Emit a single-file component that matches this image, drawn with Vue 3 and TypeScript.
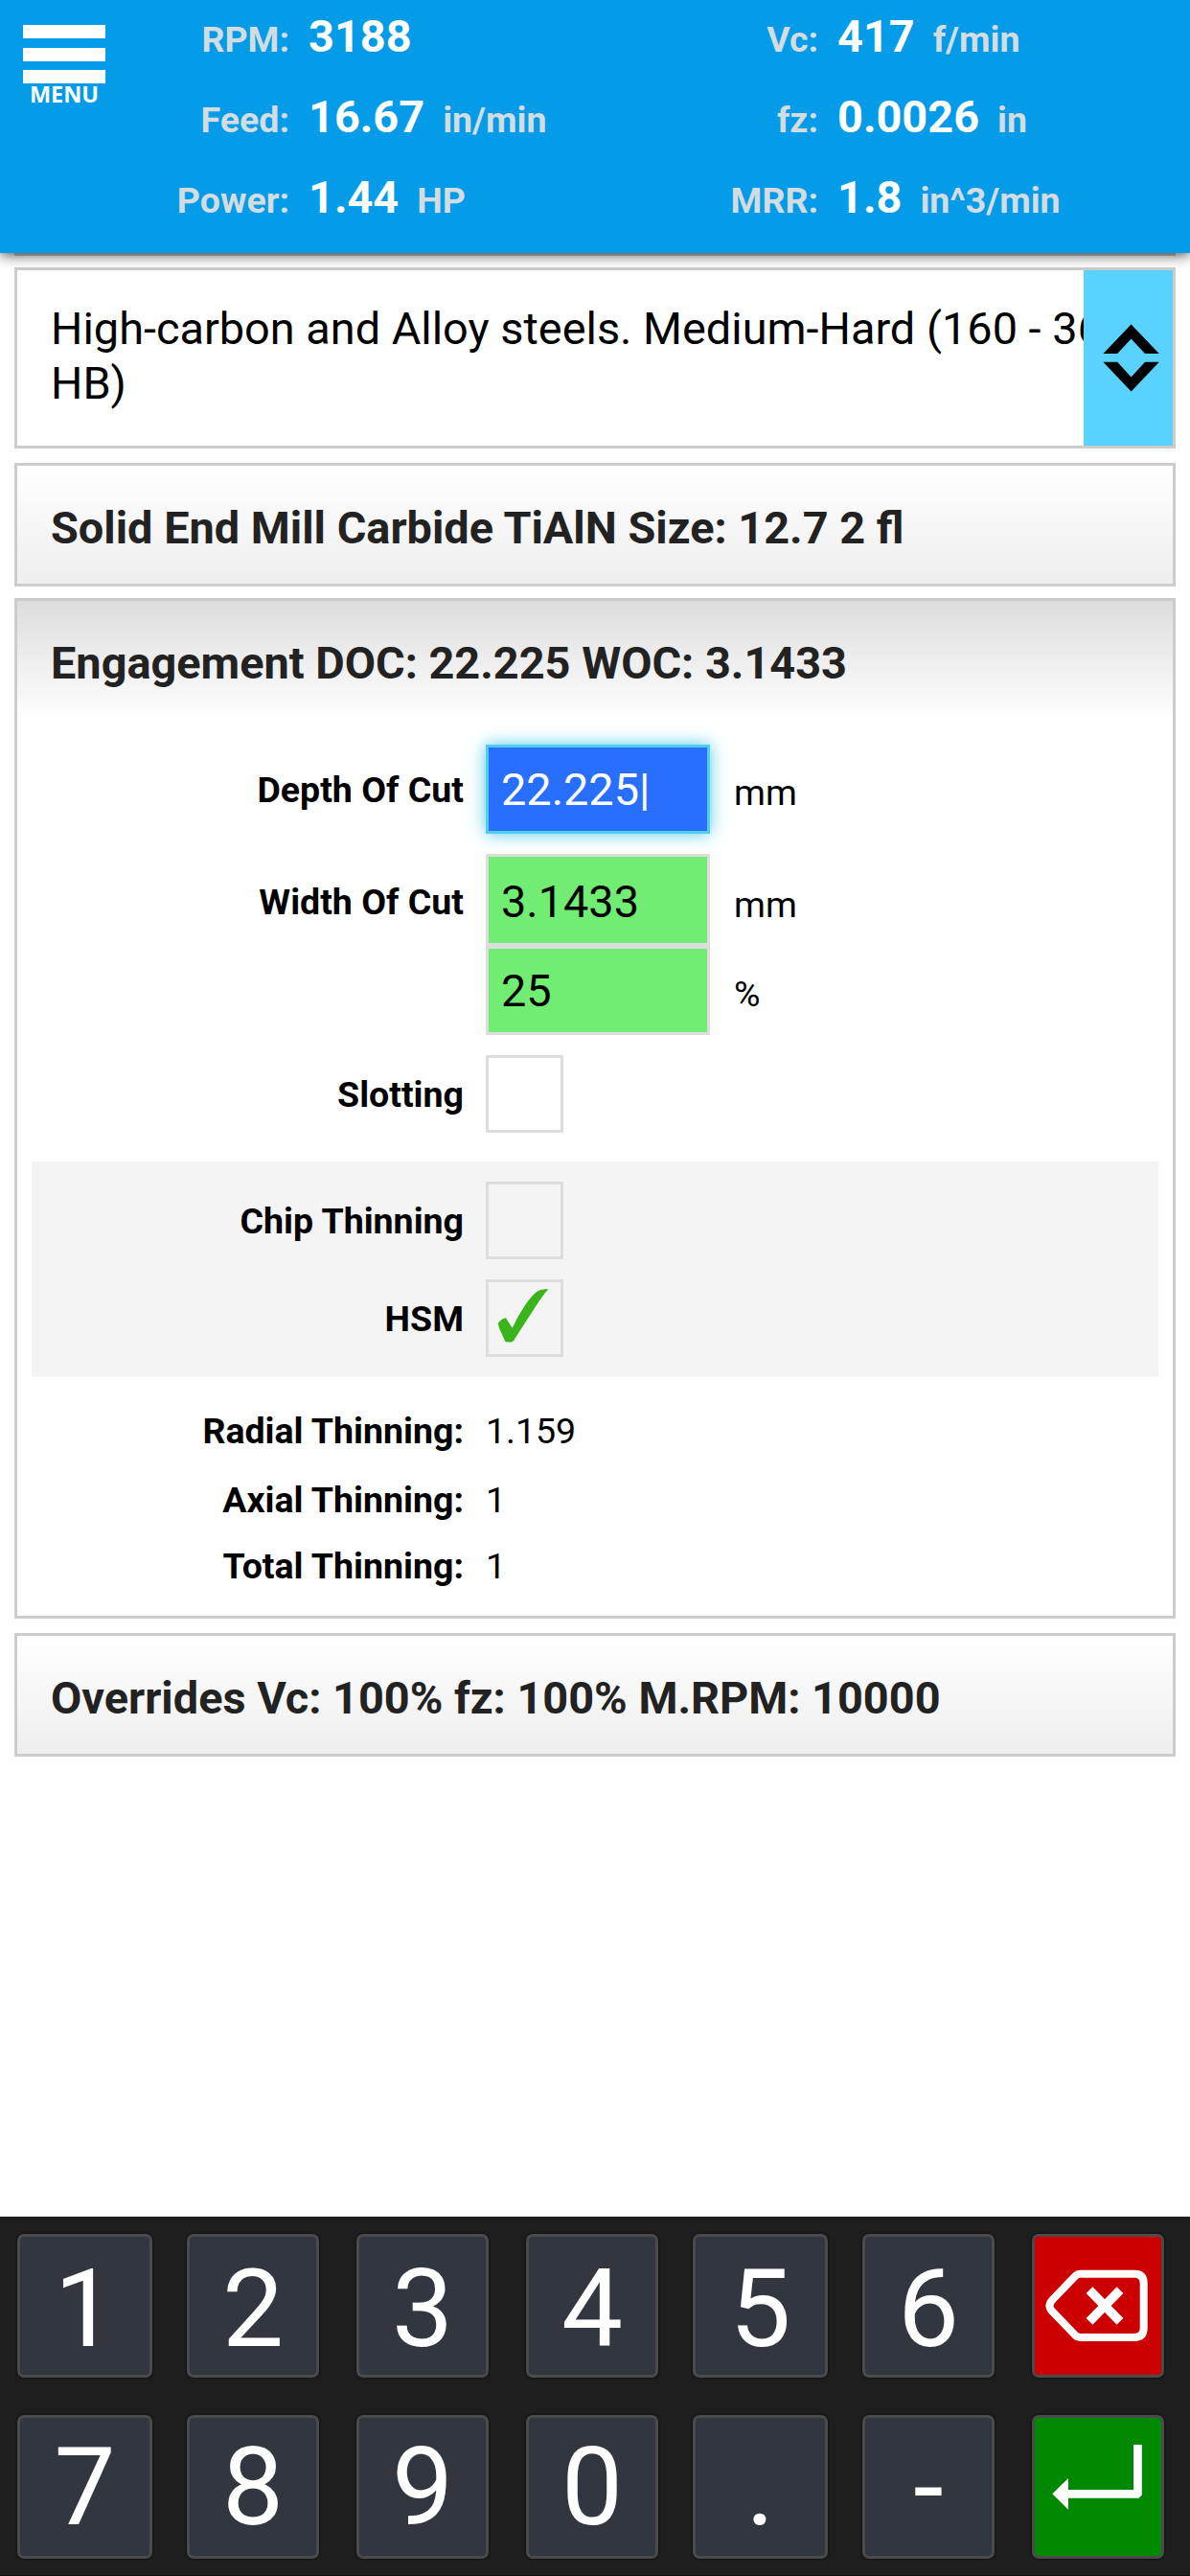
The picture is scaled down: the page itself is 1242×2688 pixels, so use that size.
<script setup lang="ts">
interface Reading {
  label: string
  value: string
  unit: string
}

interface Key {
  id: string
  kind: 'digit' | 'delete' | 'enter'
  wide?: boolean
}

const readings: Reading[][] = [
  [
    { label: 'RPM:', value: '3188', unit: '' },
    { label: 'Feed:', value: '16.67', unit: 'in/min' },
    { label: 'Power:', value: '1.44', unit: 'HP' },
  ],
  [
    { label: 'Vc:', value: '417', unit: 'f/min' },
    { label: 'fz:', value: '0.0026', unit: 'in' },
    { label: 'MRR:', value: '1.8', unit: 'in^3/min' },
  ],
]

const thinning = [
  { label: 'Radial Thinning:', value: '1.159' },
  { label: 'Axial Thinning:', value: '1' },
  { label: 'Total Thinning:', value: '1' },
]

const digit = (id: string, wide = false): Key => ({ id, kind: 'digit', wide })

const keyRows: Key[][] = [
  [digit('1', true), digit('2'), digit('3'), digit('4'), digit('5', true), digit('6'), { id: 'delete', kind: 'delete' }],
  [digit('7', true), digit('8'), digit('9'), digit('0'), digit('.', true), digit('-'), { id: 'enter', kind: 'enter' }],
]
</script>

<template>
  <div class="screen">
    <header class="topbar">
      <div class="menu">
        <span class="bar"></span>
        <span class="bar"></span>
        <span class="bar"></span>
        <span class="menu-text">MENU</span>
      </div>
      <div v-for="(col, i) in readings" :key="i" class="readings" :class="i === 0 ? 'first' : 'second'">
        <div v-for="r in col" :key="r.label" class="reading">
          <span class="r-label">{{ r.label }}</span>
          <span class="r-value">{{ r.value }}</span>
          <span class="r-unit">{{ r.unit }}</span>
        </div>
      </div>
    </header>

    <main class="content">
      <div class="tucked"></div>
      <section class="card material">
        <p class="material-text">High-carbon and Alloy steels. Medium-Hard (160 - 360 HB)</p>
        <div class="picker">
          <svg width="93" height="183" viewBox="0 0 93 183">
            <path d="M49.6 56.5 78.8 87H64L49.6 71.5 35.2 87H20.4Z" />
            <path d="M49.6 126.5 78.8 95.7H64L49.6 111.5 35.2 95.7H20.4Z" />
          </svg>
        </div>
      </section>

      <section class="card bar-card tool">
        <h2>Solid End Mill Carbide TiAlN Size: 12.7 2 fl</h2>
      </section>

      <section class="card engagement">
        <h2>Engagement DOC: 22.225 WOC: 3.1433</h2>
        <div class="row depth">
          <label>Depth Of Cut</label>
          <div class="field focus">22.225|</div>
          <span class="unit">mm</span>
        </div>
        <div class="row width">
          <label>Width Of Cut</label>
          <div class="field tall">3.1433</div>
          <span class="unit">mm</span>
        </div>
        <div class="row percent">
          <label></label>
          <div class="field">25</div>
          <span class="unit">%</span>
        </div>
        <div class="row check slotting">
          <label>Slotting</label>
          <div class="box"></div>
        </div>
        <div class="shaded">
          <div class="row check">
            <label>Chip Thinning</label>
            <div class="box"></div>
          </div>
          <div class="row check">
            <label>HSM</label>
            <div class="box">
              <svg width="75" height="75" viewBox="0 0 75 75">
                <path d="M9.7 43Q13 38 18 37.3L24.7 47.7Q30 36 37 25.5Q43.5 15.5 50 10Q54 7 62.3 7Q55 15.5 47 28.5L27.5 58.5Q26 62.3 23 62.5L17.7 62.3Q16.5 60 13.3 53Q10.5 47.5 9.7 43Z" />
              </svg>
            </div>
          </div>
        </div>
        <div v-for="t in thinning" :key="t.label" class="row result">
          <label>{{ t.label }}</label>
          <span>{{ t.value }}</span>
        </div>
      </section>

      <section class="card bar-card">
        <h2>Overrides Vc: 100% fz: 100% M.RPM: 10000</h2>
      </section>
    </main>

    <footer class="keypad">
      <div v-for="(row, i) in keyRows" :key="i" class="key-row">
        <div v-for="k in row" :key="k.id" class="key" :class="[k.kind, { wide: k.wide }]">
          <template v-if="k.kind === 'digit'">{{ k.id }}</template>
          <svg v-else-if="k.kind === 'delete'" width="132" height="144" viewBox="3 3 132 144">
            <path
              d="M50 41.8H107Q116.7 41.8 116.7 51.5V98.3Q116.7 107.9 107 107.9H50Q47.5 107.9 45.5 106L20.7 80.4Q16.2 75 20.7 69.6L45.5 43.8Q47.5 41.8 50 41.8Z"
              stroke-width="8"
            />
            <path d="M60 58.6 92 91.4M92 58.6 60 91.4" stroke-width="9.5" />
          </svg>
          <svg v-else width="132" height="144" viewBox="3 3 132 144">
            <path class="solid" d="M106 31H114.8V83.5L111.5 86.8H38V98.8L21.3 82.3 38 66V78H106Z" />
          </svg>
        </div>
      </div>
    </footer>
  </div>
</template>

<style>
body {
  margin: 0;
  background: #fff;
}
</style>

<style scoped>
.screen {
  display: flex;
  flex-direction: column;
  width: 1242px;
  height: 2688px;
  overflow: hidden;
  background: #fff;
  color: #000;
  font-family: Roboto, 'Liberation Sans', sans-serif;
  font-size: 37.5px;
}

.topbar {
  position: relative;
  z-index: 1;
  display: flex;
  flex: none;
  height: 264px;
  box-sizing: border-box;
  background: #049be8;
  box-shadow: 0 0 15px rgba(0, 0, 0, 0.9);
}

.menu {
  display: flex;
  flex-direction: column;
  align-items: center;
  gap: 9.5px;
  width: 86px;
  margin: 26px 0 0 24px;
}

.bar {
  flex: none;
  width: 86px;
  height: 14px;
  background: #fff;
}

.menu-text {
  margin-top: -15px;
  color: #fff;
  font: 700 23.5px/32px 'Open Sans', sans-serif;
}

.readings {
  flex: none;
}

.first {
  width: 552px;
}

.second {
  width: 580px;
}

.reading {
  display: flex;
  align-items: baseline;
  height: 84px;
  line-height: 76px;
  font-weight: 700;
  white-space: nowrap;
}

.r-label,
.r-unit {
  color: #d3dce0;
  line-height: 60px;
}

.r-label {
  width: 192px;
  text-align: right;
}

.r-value {
  margin-left: 20px;
  color: #fff;
  font-size: 46.875px;
}

.r-unit {
  margin-left: 19px;
}

.content {
  flex: 1;
  padding: 0 15px;
}

.tucked {
  height: 3px;
  margin-bottom: 12px;
  background: #ccc;
}

.card {
  box-sizing: border-box;
  border: 3px solid #ccc;
  background: #fff;
}

h2 {
  margin: 0;
  padding-left: 35px;
  color: #222;
  font-size: 46.875px;
  font-weight: 700;
  line-height: 130px;
  white-space: nowrap;
}

.material {
  display: flex;
  position: relative;
  height: 189px;
  margin-bottom: 15px;
}

.material-text {
  flex: 1;
  margin: 33px 0 0 35px;
  font-size: 46.875px;
  line-height: 57px;
}

.picker {
  position: absolute;
  top: 0;
  right: 0;
  width: 93px;
  height: 183px;
  background: #5ad2ff;
}

svg {
  display: block;
}

.bar-card {
  height: 129px;
  background: linear-gradient(#fff, #eee);
}

.tool {
  margin-bottom: 12px;
}

.engagement {
  height: 1065px;
  margin-bottom: 15px;
  background: linear-gradient(#ddd, #fff 126px);
}

.engagement h2 {
  height: 150px;
}

.row {
  display: flex;
  align-items: flex-start;
}

.row label {
  flex: none;
  width: 466px;
  margin-right: 23px;
  font-weight: 700;
  text-align: right;
}

.field {
  flex: none;
  box-sizing: border-box;
  width: 234px;
  height: 93px;
  padding-left: 13px;
  border: 3px solid #ddd;
  background: #70ed72;
  font-size: 46.875px;
  line-height: 88px;
}

.field.tall {
  height: 96px;
  line-height: 94px;
}

.field.focus {
  border-color: #51cbee;
  background: #286fff;
  box-shadow: 0 0 17px #51cbee;
  color: #fff;
}

.unit {
  margin-left: 25px;
}

.depth {
  height: 93px;
  margin-bottom: 21px;
  line-height: 94px;
}

.width {
  height: 96px;
  line-height: 100px;
}

.width .unit {
  line-height: 106px;
}

.percent {
  height: 93px;
  margin-bottom: 21px;
}

.depth .unit,
.percent .unit {
  line-height: 100px;
}

.check {
  height: 81px;
  line-height: 82px;
}

.box {
  box-sizing: border-box;
  width: 81px;
  height: 81px;
  border: 3px solid #ddd;
}

.box path {
  fill: #39b41b;
}

.shaded {
  display: flex;
  flex-direction: column;
  gap: 21px;
  margin: 30px 15px 20px;
  padding: 21px 0;
  background: #f4f4f4;
}

.shaded label {
  width: 451px;
}

.result {
  height: 72px;
  line-height: 72px;
}

.result:last-child {
  line-height: 66px;
}

.keypad {
  display: flex;
  flex: none;
  flex-direction: column;
  gap: 39px;
  height: 375px;
  box-sizing: border-box;
  padding: 18px 0 0 18px;
  border-bottom: 1px solid #0f0f10;
  background: #1e1e1e;
}

.key-row {
  display: grid;
  grid-template-columns: 177px 177px 177px 174px 177px 177px 138px;
}

.key {
  box-sizing: border-box;
  width: 138px;
  height: 150px;
  border: 3px solid #4b4b4b;
  border-radius: 7px;
  background: #32363f;
  box-shadow: 0 0 3px rgba(0, 0, 0, 0.8);
  color: #fff;
  font-size: 114px;
  line-height: 150px;
  text-align: center;
}

.key-row:last-child .key {
  line-height: 144px;
}

.key.wide {
  width: 141px;
}

.key.delete {
  background: #c00;
}

.key.enter {
  background: #080;
}

.key path {
  fill: none;
  stroke: #fff;
}

.key path.solid {
  fill: #fff;
  stroke: none;
}
</style>
